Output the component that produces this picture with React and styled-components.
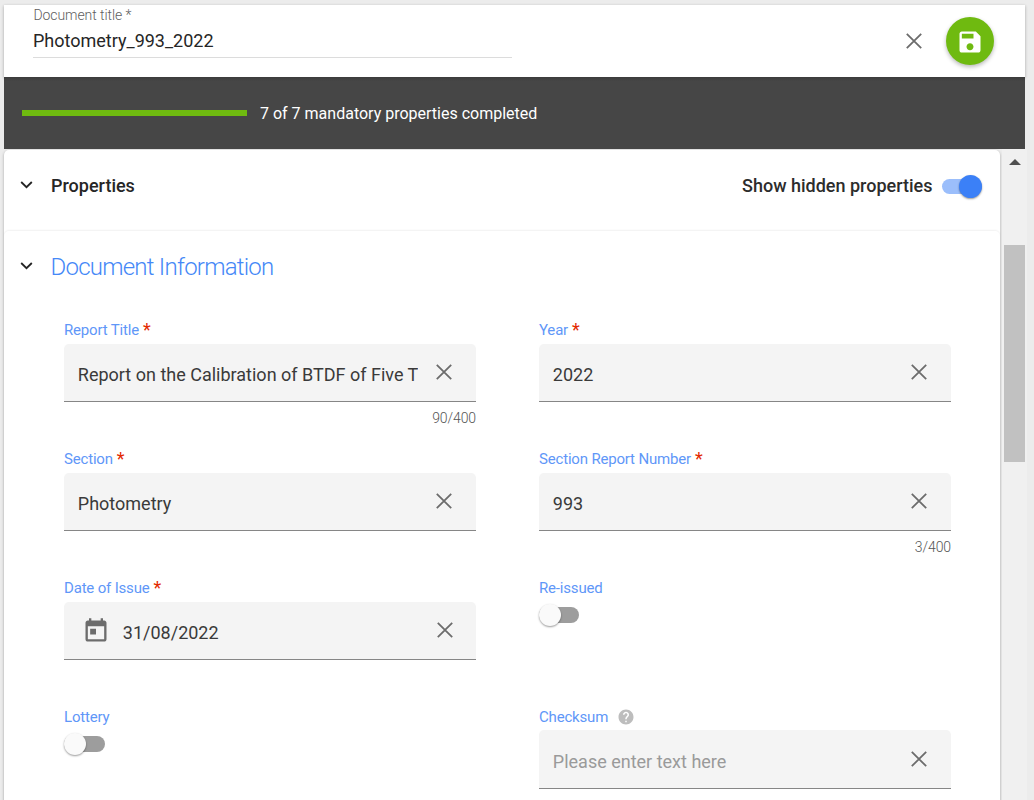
import React from 'react';
import styled, { createGlobalStyle } from 'styled-components';

const Global = createGlobalStyle`
  *, *::before, *::after { box-sizing: border-box; }
  html, body { margin: 0; height: 100%; overflow: hidden; }
  body { background: #ececec; font-family: Roboto, "Liberation Sans", sans-serif; color: rgba(0, 0, 0, 0.87); }
  #root { height: 100%; }
  button, input { font: inherit; }
`;

const Page = styled.div`
  display: flex;
  flex-direction: column;
  height: 800px;
  padding: 5px 7px 0 4px;
  overflow: hidden;
`;

const TitleBar = styled.header`
  flex: none;
  display: flex;
  align-items: flex-start;
  width: 1021px;
  height: 72px;
  padding: 0 31px 0 29px;
  background: #fff;
  box-shadow: 0 1px 3px rgba(0, 0, 0, 0.3);
`;

const TitleField = styled.label`
  display: flex;
  flex-direction: column;
  width: 479px;
  height: 53px;
  margin-right: auto;
  border-bottom: 1px solid #dcdcdc;
`;

const TitleCaption = styled.span`
  height: 20px;
  padding-left: 0.5px;
  font-size: 14px;
  line-height: 20px;
  font-weight: 300;
  letter-spacing: -0.08px;
  color: #606060;
`;

const TitleValue = styled.span`
  font-size: 18px;
  line-height: 32px;
  font-weight: 400;
  color: #262626;
`;

const IconButton = styled.button`
  display: grid;
  place-items: center;
  width: 24px;
  height: 24px;
  margin: ${p => p.$margin || 0};
  padding: 0;
  border: 0;
  background: none;
  color: #6c6c6c;
`;

const SaveButton = styled.button`
  display: grid;
  place-items: center;
  width: 48px;
  height: 48px;
  margin-top: 12px;
  padding: 1px 0 0;
  border: 0;
  border-radius: 50%;
  background: #6fba10;
  color: #fff;
  box-shadow: 0 2px 4px rgba(0, 0, 0, 0.28);
`;

const StatusBar = styled.section`
  position: relative;
  flex: none;
  display: flex;
  align-items: center;
  gap: 13px;
  width: 1021px;
  height: 72px;
  padding-left: 18px;
  background: linear-gradient(#3c3c3c, #464646 4px);
  color: #fff;
  font-size: 16px;
  line-height: 24px;
`;

const StatusText = styled.span`
  padding-top: 2px;
`;

const Progress = styled.div`
  width: 225px;
  height: 6px;
  background: #6fba10;
`;

const Body = styled.div`
  display: flex;
  flex: 1;
  min-height: 0;
`;

const Panel = styled.main`
  flex: none;
  width: 996px;
  height: 720px;
  margin-top: 1px;
  background: #fff;
  border-radius: 5px 5px 0 0;
  box-shadow: 0 1px 3px rgba(0, 0, 0, 0.3);
`;

const SectionHeader = styled.div`
  display: flex;
  align-items: center;
  height: 72px;
  padding: 0 18px 0 15px;
`;

const Chevron = styled.span`
  display: grid;
  width: 15px;
  margin-right: 17px;
  padding-bottom: 3px;
`;

const Heading = styled.h2`
  margin: 0 auto 0 0;
  font-size: 18px;
  line-height: 26px;
  font-weight: 500;
  color: #262626;
`;

const SectionTitle = styled.h3`
  margin: 0 0 0 -0.5px;
  font-size: 24px;
  line-height: 32px;
  font-weight: 300;
  letter-spacing: -0.76px;
  color: #4588f7;
`;

const ToggleLabel = styled.span`
  margin-right: 9.5px;
  font-size: 18px;
  line-height: 26px;
  font-weight: 500;
  color: #2c2c2c;
`;

const Track = styled.span`
  display: flex;
  align-items: center;
  justify-content: ${p => (p.$on ? 'flex-end' : 'flex-start')};
  width: ${p => p.$width || 40}px;
  height: ${p => (p.$on ? 15 : 16)}px;
  border-radius: 8px;
  background: ${p => (p.$on ? '#9bbefb' : '#9d9d9d')};
  margin: ${p => p.$margin || 0};
`;

const Knob = styled.span`
  flex: none;
  width: ${p => (p.$on ? 23 : 22)}px;
  height: ${p => (p.$on ? 23 : 22)}px;
  border-radius: 50%;
  background: ${p => (p.$on ? '#3b80f7' : '#fafafa')};
  box-shadow: 0 1px 2px rgba(0, 0, 0, 0.4);
`;

const SubPanel = styled.section`
  height: 640px;
  margin-top: 9px;
  border-radius: 5px 5px 0 0;
  box-shadow: 0 -1px 2px rgba(0, 0, 0, 0.06);
`;

const Fields = styled.div`
  display: grid;
  grid-template-columns: 412px 412px;
  grid-auto-rows: 129px;
  column-gap: 63px;
  padding: 17px 0 0 60px;
`;

const Field = styled.div`
  display: flex;
  flex-direction: column;
`;

const Label = styled.label`
  display: flex;
  align-items: center;
  height: 20px;
  margin-bottom: ${p => p.$gap}px;
  font-size: 15px;
  line-height: 20px;
  letter-spacing: -0.18px;
  color: #5f97f8;
  white-space: pre;
`;

const Required = styled.span`
  margin-left: 4px;
  font-size: 18px;
  line-height: 20px;
  color: #e32900;
`;

const Help = styled.span`
  display: grid;
  margin-left: 9px;
  color: #bdbdbd;
`;

const Box = styled.div`
  display: flex;
  align-items: center;
  justify-content: space-between;
  flex: none;
  height: ${p => p.$height}px;
  padding: 0 20px 0 ${p => (p.$dated ? 17.5 : 14)}px;
  border-bottom: 1px solid #868686;
  border-radius: 5px 5px 0 0;
  background: #f4f4f4;
`;

const Value = styled.span`
  width: 340px;
  flex: 0 1 auto;
  margin: 0 auto 0 -0.2px;
  padding-top: ${p => (p.$empty ? 5 : 4)}px;
  overflow: hidden;
  white-space: nowrap;
  font-size: 18px;
  line-height: 26px;
  font-weight: 400;
  color: ${p => (p.$empty ? '#9a9a9a' : '#3a3a3a')};
`;

const CalendarSlot = styled.span`
  display: grid;
  margin-right: 13.5px;
  color: #6c6c6c;
`;

const Counter = styled.span`
  padding-top: 6px;
  text-align: right;
  font-size: 14px;
  line-height: 20px;
  font-weight: 300;
  letter-spacing: -0.1px;
  color: #555;
`;

const Scrollbar = styled.div`
  flex: none;
  display: flex;
  flex-direction: column;
  align-items: center;
  width: 25px;
  margin-left: 2px;
  background: #f0f0f0;
  z-index: 1;
`;

const Arrow = styled.div`
  width: 0;
  height: 0;
  margin: 10px 0 80px;
  border: solid transparent;
  border-width: 0 6px 6px;
  border-bottom-color: #505050;
`;

const Thumb = styled.div`
  width: 21px;
  height: 217px;
  background: #c1c1c1;
`;

const Cross = () => (
  <svg width="16" height="16" viewBox="0 0 16 16" fill="none" stroke="currentColor" strokeWidth="1.8">
    <path d="M.8.8 15.2 15.2M15.2.8.8 15.2" />
  </svg>
);

const ChevronDown = () => (
  <svg width="15" height="10" viewBox="0 0 15 10" fill="none" stroke="#242424" strokeWidth="1.8">
    <path d="M2.2 2 7.5 7.200 12.800 2" />
  </svg>
);

const SaveIcon = () => (
  <svg width="28" height="28" viewBox="0 0 24 24" fill="currentColor">
    <path d="M17 3H5c-1.110 0-2 .9-2 2v14c0 1.100.890 2 2 2h14c1.100 0 2-.9 2-2V7l-4-4zm-5 16c-1.660 0-3-1.340-3-3s1.340-3 3-3 3 1.340 3 3-1.340 3-3 3zm3-10H5V5h10v4z" />
  </svg>
);

const CalendarIcon = () => (
  <svg width="28" height="28" viewBox="0 0 24 24" fill="currentColor">
    <path d="M19 3h-1V1h-2v2H8V1H6v2H5c-1.110 0-1.990.9-1.990 2L3 19c0 1.100.890 2 2 2h14c1.100 0 2-.9 2-2V5c0-1.100-.9-2-2-2zm0 16H5V8h14v11zM7 10h5v5H7z" />
  </svg>
);

const HelpIcon = () => (
  <svg width="18" height="18" viewBox="0 0 24 24" fill="currentColor">
    <path d="M12 2C6.480 2 2 6.480 2 12s4.480 10 10 10 10-4.480 10-10S17.520 2 12 2zm1 17h-2v-2h2v2zm2.070-7.750-.9.920C13.450 12.900 13 13.500 13 15h-2v-.5c0-1.100.450-2.100 1.170-2.830l1.240-1.260c.370-.360.590-.860.590-1.410 0-1.100-.9-2-2-2s-2 .9-2 2H8c0-2.210 1.790-4 4-4s4 1.790 4 4c0 .880-.360 1.680-.930 2.250z" />
  </svg>
);

const Toggle = ({ on, margin, width }) => (
  <Track $on={on} $margin={margin} $width={width} role="switch" aria-checked={!!on}>
    <Knob $on={on} />
  </Track>
);

const fields = [
  { label: 'Report Title', required: true, value: 'Report on the Calibration of BTDF of Five T', count: '90/400' },
  { label: 'Year', required: true, value: '2022' },
  { label: 'Section', required: true, value: 'Photometry' },
  { label: 'Section Report Number', required: true, value: '993', count: '3/400' },
  { label: 'Date of Issue', required: true, value: '31/08/2022', date: true },
  { label: 'Re-issued', toggle: true },
  { label: 'Lottery', toggle: true, toggleWidth: 41 },
  { label: 'Checksum', help: true, placeholder: 'Please enter text here' },
];

const PropertyField = ({ field }) => (
  <Field>
    <Label $gap={field.help ? 3 : 4}>
      {field.label}
      {field.required && <Required>*</Required>}
      {field.help && <Help><HelpIcon /></Help>}
    </Label>
    {field.toggle ? (
      <Toggle margin="5px 0 0" width={field.toggleWidth} />
    ) : (
      <Box $dated={field.date} $height={field.help ? 59 : 58}>
        {field.date && <CalendarSlot><CalendarIcon /></CalendarSlot>}
        <Value $empty={!field.value}>{field.value || field.placeholder}</Value>
        <IconButton $margin="0 0 1px" aria-label="Clear"><Cross /></IconButton>
      </Box>
    )}
    {field.count && <Counter>{field.count}</Counter>}
  </Field>
);

export default function App() {
  return (
    <>
      <Global />
      <Page>
        <TitleBar>
          <TitleField>
            <TitleCaption>Document title *</TitleCaption>
            <TitleValue>Photometry_993_2022</TitleValue>
          </TitleField>
          <IconButton $margin="24px 20px 0 0" aria-label="Close"><Cross /></IconButton>
          <SaveButton aria-label="Save"><SaveIcon /></SaveButton>
        </TitleBar>
        <StatusBar>
          <Progress />
          <StatusText>7 of 7 mandatory properties completed</StatusText>
        </StatusBar>
        <Body>
          <Panel>
            <SectionHeader>
              <Chevron><ChevronDown /></Chevron>
              <Heading>Properties</Heading>
              <ToggleLabel>Show hidden properties</ToggleLabel>
              <Toggle on />
            </SectionHeader>
            <SubPanel>
              <SectionHeader>
                <Chevron><ChevronDown /></Chevron>
                <SectionTitle>Document Information</SectionTitle>
              </SectionHeader>
              <Fields>
                {fields.map(field => <PropertyField key={field.label} field={field} />)}
              </Fields>
            </SubPanel>
          </Panel>
          <Scrollbar>
            <Arrow />
            <Thumb />
          </Scrollbar>
        </Body>
      </Page>
    </>
  );
}
